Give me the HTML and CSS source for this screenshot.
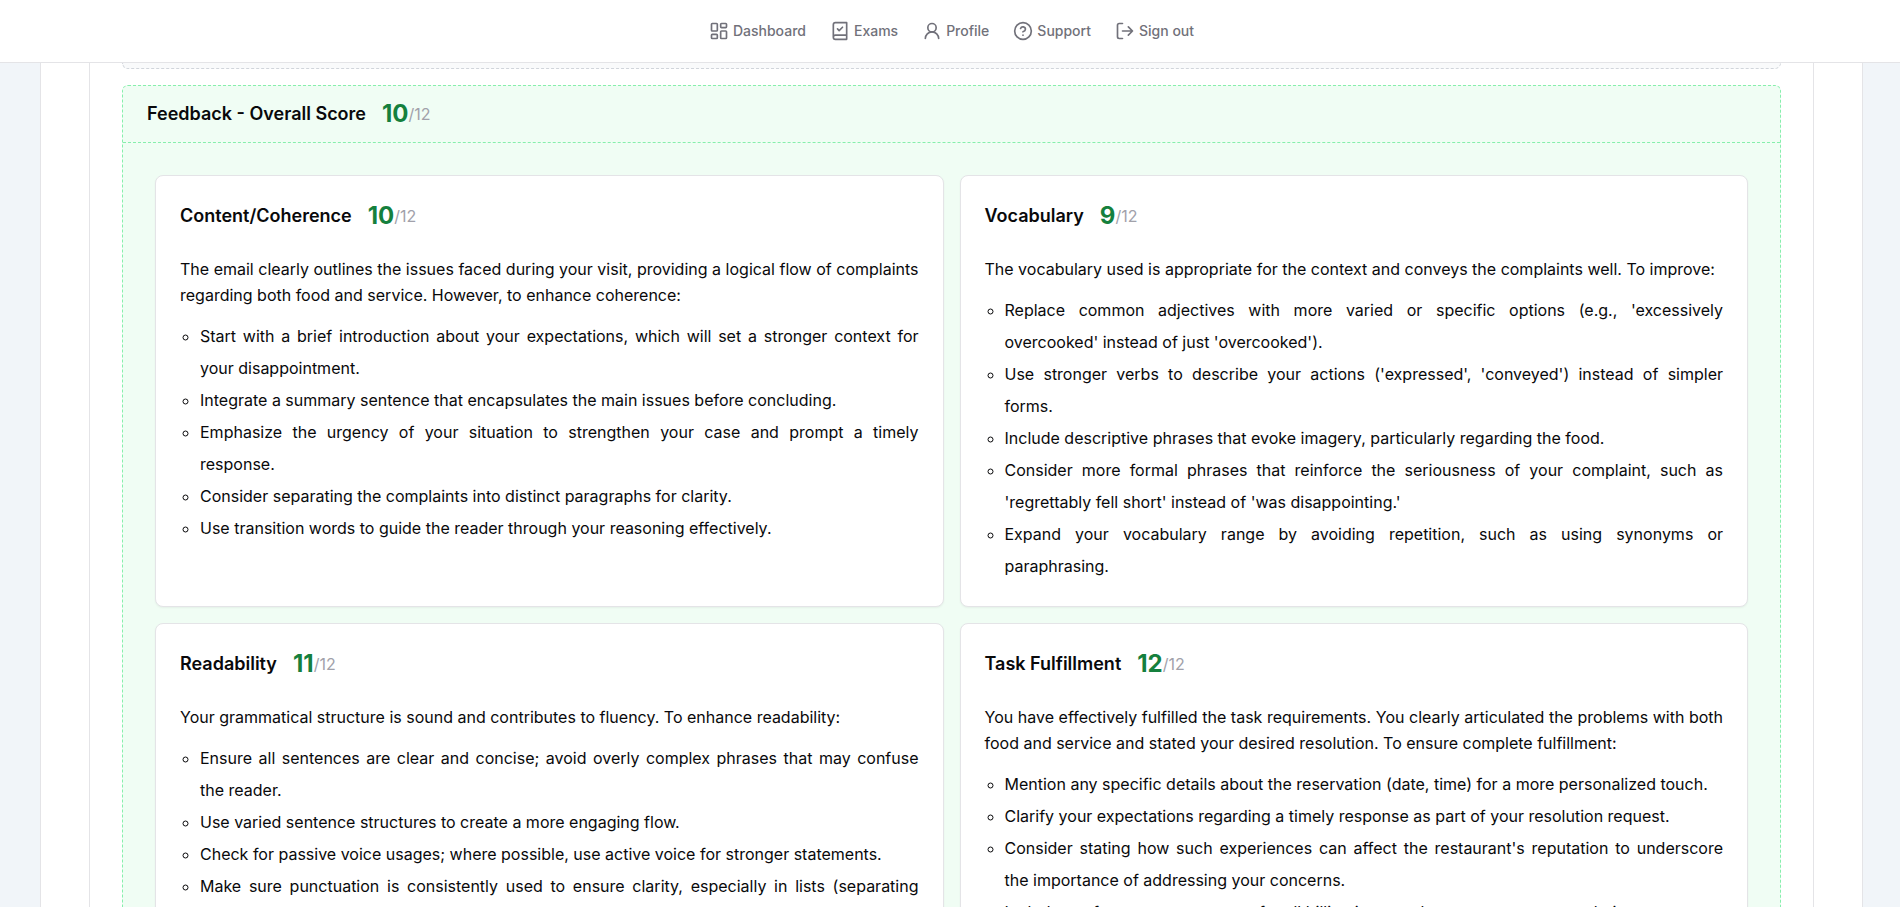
FILE: index.html
```html
<!DOCTYPE html>
<html lang="en">
<head>
<meta charset="utf-8">
<title>Exam feedback</title>
<link rel="stylesheet" href="styles.css">
</head>
<body>
<header class="topbar">
  <nav class="nav" aria-label="Main">
    <a class="nav-link" href="#dashboard">
      <svg class="icon" viewBox="0 0 24 24" aria-hidden="true"><rect x="3" y="3" width="7" height="9" rx="1"/><rect x="14" y="3" width="7" height="5" rx="1"/><rect x="14" y="12" width="7" height="9" rx="1"/><rect x="3" y="16" width="7" height="5" rx="1"/></svg>
      Dashboard
    </a>
    <a class="nav-link" href="#exams">
      <svg class="icon" viewBox="0 0 24 24" aria-hidden="true"><path d="M4 19.5v-15A2.5 2.5 0 0 1 6.5 2H20v20H6.5a2.5 2.5 0 0 1 0-5H20"/><path d="m9 9.5 2 2 4-4"/></svg>
      Exams
    </a>
    <a class="nav-link" href="#profile">
      <svg class="icon" viewBox="0 0 24 24" aria-hidden="true"><circle cx="12" cy="8" r="5"/><path d="M20 21a8 8 0 0 0-16 0"/></svg>
      Profile
    </a>
    <a class="nav-link" href="#support">
      <svg class="icon" viewBox="0 0 24 24" aria-hidden="true"><circle cx="12" cy="12" r="10"/><path d="M9.090 9a3 3 0 0 1 5.830 1c0 2-3 3-3 3M12 17h.01"/></svg>
      Support
    </a>
    <a class="nav-link" href="#sign-out">
      <svg class="icon" viewBox="0 0 24 24" aria-hidden="true"><path d="M9 21H5a2 2 0 0 1-2-2V5a2 2 0 0 1 2-2h4M16 17l5-5-5-5M21 12H9"/></svg>
      Sign out
    </a>
  </nav>
</header>
<main class="page">
  <div class="sheet">
    <div class="panel">
      <div class="answer"></div>
      <section class="feedback">
        <h2 class="title feedback-head">Feedback - Overall Score <span class="points"><span class="score">10</span><span class="max">/12</span></span></h2>
        <div class="cards">
          <article class="card">
            <h3 class="title">Content/Coherence <span class="points"><span class="score">10</span><span class="max">/12</span></span></h3>
            <p class="summary">The email clearly outlines the issues faced during your visit, providing a logical flow of complaints regarding both food and service. However, to enhance coherence:</p>
            <ul class="tips">
              <li>Start with a brief introduction about your expectations, which will set a stronger context for your disappointment.</li>
              <li>Integrate a summary sentence that encapsulates the main issues before concluding.</li>
              <li>Emphasize the urgency of your situation to strengthen your case and prompt a timely response.</li>
              <li>Consider separating the complaints into distinct paragraphs for clarity.</li>
              <li>Use transition words to guide the reader through your reasoning effectively.</li>
            </ul>
          </article>
          <article class="card">
            <h3 class="title">Vocabulary <span class="points"><span class="score">9</span><span class="max">/12</span></span></h3>
            <p class="summary">The vocabulary used is appropriate for the context and conveys the complaints well. To improve:</p>
            <ul class="tips">
              <li>Replace common adjectives with more varied or specific options (e.g., 'excessively overcooked' instead of just 'overcooked').</li>
              <li>Use stronger verbs to describe your actions ('expressed', 'conveyed') instead of simpler forms.</li>
              <li>Include descriptive phrases that evoke imagery, particularly regarding the food.</li>
              <li>Consider more formal phrases that reinforce the seriousness of your complaint, such as 'regrettably fell short' instead of 'was disappointing.'</li>
              <li>Expand your vocabulary range by avoiding repetition, such as using synonyms or paraphrasing.</li>
            </ul>
          </article>
          <article class="card">
            <h3 class="title">Readability <span class="points"><span class="score">11</span><span class="max">/12</span></span></h3>
            <p class="summary">Your grammatical structure is sound and contributes to fluency. To enhance readability:</p>
            <ul class="tips">
              <li>Ensure all sentences are clear and concise; avoid overly complex phrases that may confuse the reader.</li>
              <li>Use varied sentence structures to create a more engaging flow.</li>
              <li>Check for passive voice usages; where possible, use active voice for stronger statements.</li>
              <li>Make sure punctuation is consistently used to ensure clarity, especially in lists (separating items with commas).</li>
            </ul>
          </article>
          <article class="card">
            <h3 class="title">Task Fulfillment <span class="points"><span class="score">12</span><span class="max">/12</span></span></h3>
            <p class="summary">You have effectively fulfilled the task requirements. You clearly articulated the problems with both food and service and stated your desired resolution. To ensure complete fulfillment:</p>
            <ul class="tips">
              <li>Mention any specific details about the reservation (date, time) for a more personalized touch.</li>
              <li>Clarify your expectations regarding a timely response as part of your resolution request.</li>
              <li>Consider stating how such experiences can affect the restaurant's reputation to underscore the importance of addressing your concerns.</li>
              <li>Include a reference to your name for all billing issues when you request a resolution.</li>
            </ul>
          </article>
        </div>
      </section>
    </div>
  </div>
</main>
</body>
</html>
```
FILE: styles.css
```css
* { box-sizing: border-box; }

body {
  margin: 0;
  height: 100vh;
  display: flex;
  flex-direction: column;
  overflow: hidden;
  background: #f1f5f9;
  color: #09090b;
  font: 400 16px/26px Inter, sans-serif;
}

h2, h3, p, ul { margin: 0; }

.topbar {
  flex: none;
  padding: 0 37px 0 40px;
  background: #fff;
  border-bottom: 1px solid #e4e4e7;
}

.nav {
  display: flex;
  justify-content: center;
  align-items: center;
  gap: 24px;
  height: 62px;
}

.nav-link {
  display: flex;
  align-items: center;
  gap: 4px;
  color: #71717a;
  font-size: 14px;
  font-weight: 500;
  line-height: 20px;
  text-decoration: none;
}

.icon {
  width: 20px;
  height: 20px;
  fill: none;
  stroke: currentColor;
  stroke-width: 2;
  stroke-linecap: round;
  stroke-linejoin: round;
}

.page {
  flex: 1;
  min-height: 0;
  overflow: hidden;
  padding: 0 37px 0 40px;
}

.sheet {
  padding: 0 48px;
  background: #fff;
  border: solid #e4e4e7;
  border-width: 0 1px;
}

.panel {
  padding: 0 32px;
  border: solid #e4e4e7;
  border-width: 0 1px;
}

.answer {
  height: 6px;
  margin-bottom: 16px;
  background: #f9fafb;
  border: 1px dashed #d1d5db;
  border-top: 0;
  border-radius: 0 0 6px 6px;
}

.feedback {
  background: #f0fdf4;
  border: 1px dashed #86efac;
  border-radius: 6px;
}

.title {
  display: flex;
  align-items: center;
  gap: 16px;
  font-size: 18px;
  font-weight: 600;
  line-height: 32px;
}

.feedback-head {
  padding: 12px 24px;
  border-bottom: 1px dashed #86efac;
}

.points {
  display: flex;
  align-items: center;
}

.score {
  color: #15803d;
  font-size: 24px;
  font-weight: 700;
}

.max {
  color: #a1a1aa;
  font-size: 16px;
  font-weight: 400;
}

.cards {
  display: grid;
  grid-template-columns: 1fr 1fr;
  gap: 16px;
  padding: 32px;
}

.card {
  padding: 24px;
  background: #fff;
  border: 1px solid #e4e4e7;
  border-radius: 8px;
  box-shadow: 0 1px 2px rgba(0, 0, 0, 0.05);
  text-align: justify;
}

.summary { margin: 24px 0 12px; }

.tips {
  padding-left: 20px;
  list-style: circle;
  line-height: 32px;
}
```
